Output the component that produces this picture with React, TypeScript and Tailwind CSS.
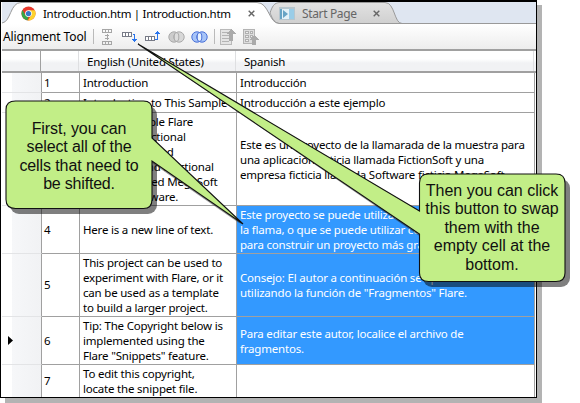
import type { ReactNode } from "react";

type Row = {
  id: number;
  height: string;
  source: string[];
  target: string[];
  selected?: boolean;
  current?: boolean;
};

const rows: Row[] = [
  { id: 1, height: "h-[20px]", source: ["Introduction"], target: ["Introducción"] },
  { id: 2, height: "h-[20px]", source: ["Introduction to This Sample"], target: ["Introducción a este ejemplo"] },
  {
    id: 3,
    height: "h-[93px]",
    source: [
      "This is a sample Flare",
      "project of a fictional",
      "application called",
      "FictionSoft and a fictional",
      "company called MegaSoft",
      "Fictional Software.",
    ],
    target: [
      "Este es un proyecto de la llamarada de la muestra para",
      "una aplicación ficticia llamada FictionSoft y una",
      "empresa ficticia llamada Software ficticio MegaSoft.",
    ],
  },
  {
    id: 4,
    height: "h-[48px]",
    source: ["Here is a new line of text."],
    target: [
      "Este proyecto se puede utilizar para probar",
      "la flama, o que se puede utilizar como base",
      "para construir un proyecto más grande.",
    ],
    selected: true,
  },
  {
    id: 5,
    height: "h-[63px]",
    source: [
      "This project can be used to",
      "experiment with Flare, or it",
      "can be used as a template",
      "to build a larger project.",
    ],
    target: ["Consejo: El autor a continuación se aplica", 'utilizando la función de "Fragmentos" Flare.'],
    selected: true,
  },
  {
    id: 6,
    height: "h-[48px]",
    source: ["Tip: The Copyright below is", "implemented using the", 'Flare "Snippets" feature.'],
    target: ["Para editar este autor, localice el archivo de", "fragmentos."],
    selected: true,
    current: true,
  },
  { id: 7, height: "h-[33px]", source: ["To edit this copyright,", "locate the snippet file."], target: [] },
];

function Lines({ lines }: { lines: string[] }) {
  return (
    <div className="flex flex-col whitespace-nowrap leading-[15px]">
      {lines.map((line) => (
        <span key={line}>{line}</span>
      ))}
    </div>
  );
}

function ChromeIcon() {
  return (
    <svg width="15" height="15" viewBox="0 0 16 16" className="shrink-0">
      <circle cx="8" cy="8" r="7.5" fill="#e8392c" />
      <path d="M1.5 4.3 5 10.2 8 11.5 6.8 15.4A7.5 7.5 0 0 1 1.5 4.3Z" fill="#37a647" />
      <path d="M8 4.6h6.7A7.5 7.5 0 0 1 7.2 15.5L11 9.8Z" fill="#fcd32d" />
      <circle cx="8" cy="8" r="3.6" fill="#fff" />
      <circle cx="8" cy="8" r="2.8" fill="#3678c8" />
    </svg>
  );
}

function CloseIcon() {
  return (
    <svg width="7" height="7" viewBox="0 0 7 7" className="shrink-0">
      <path d="M.7.7 6.3 6.3M6.3.7.7 6.3" stroke="#666" strokeWidth="1.4" />
    </svg>
  );
}

function TabStrip() {
  return (
    <div className="relative h-[22px] shrink-0 bg-[#dfe6f1]">
      <svg className="absolute left-0 top-0" width="534" height="22" viewBox="0 0 534 22">
        <defs>
          <linearGradient id="tab" x1="0" y1="0" x2="0" y2="1">
            <stop offset="0" stopColor="#e2e2e2" />
            <stop offset="1" stopColor="#d0d0d0" />
          </linearGradient>
        </defs>
        <path d="M277 21.5C271 20 270 15 268 11C270 5 272 .5 278 .5H383C393 .5 392 21.5 400 21.5Z" fill="url(#tab)" stroke="#999" />
        <path d="M400 21.5H534" stroke="#999" />
        <path d="M0 21C9 20 8 .5 19 .5H255C267 .5 267 21.5 277 21.5V22H0Z" fill="#fff" />
        <path d="M0 21C9 20 8 .5 19 .5H255C267 .5 267 21.5 277 21.5" fill="none" stroke="#999" />
      </svg>
      <div className="relative flex h-[22px] items-center text-[12px] leading-[15px]">
        <div className="flex w-[267px] items-center pl-[19px]">
          <ChromeIcon />
          <span className="ml-[7px] w-[188px] whitespace-nowrap text-[11.5px] tracking-[-0.28px] text-black">
            Introduction.htm | Introduction.htm
          </span>
          <span className="ml-[17px]">
            <CloseIcon />
          </span>
        </div>
        <div className="flex items-center pl-[10px]">
          <svg width="16" height="13" viewBox="0 0 16 13" className="shrink-0">
            <rect width="16" height="13" fill="#b7c6ce" />
            <rect x="1" y="2" width="9" height="10" fill="#e4f2f8" />
            <rect x="10" y="2" width="5" height="10" fill="#9acde8" />
            <path d="M1 2h2v10H1zM4 3l5 4-5 4z" fill="#67a4c5" />
          </svg>
          <span className="ml-[7px] w-[55px] whitespace-nowrap tracking-[-0.35px] text-[#666]">Start Page</span>
          <span className="ml-[16px]">
            <CloseIcon />
          </span>
        </div>
      </div>
    </div>
  );
}

function Separator() {
  return <span className="h-[15px] w-px bg-[#bababa]" />;
}

function MoveIcon({ up = false }: { up?: boolean }) {
  return (
    <svg width="16" height="12" viewBox="0 0 16 12" shapeRendering="crispEdges">
      <g fill="#fff" stroke="#777a86">
        <path d={up ? "M.5 6.5h9v4h-9zM3.5 6.5v4M6.5 6.5v4" : "M.5 1.5h9v4h-9zM3.5 1.5v4M6.5 1.5v4"} />
      </g>
      {up ? (
        <path d="M10 9h2V4h-2V3h1V2h1V1h1v1h1v1h1v1h-2v6h-3z" fill="#2874ed" />
      ) : (
        <path d="M11 3h2v5h2v1h-1v1h-1v1h-1v-1h-1V9h-1V8h2V4h-1z" fill="#2874ed" />
      )}
    </svg>
  );
}

function CirclesIcon({ active = false }: { active?: boolean }) {
  const stroke = active ? "#4970d8" : "#aaa";
  return (
    <svg width="17" height="12" viewBox="0 0 17 12">
      <circle cx="6" cy="6" r="5.2" fill={active ? "#a7c4f8" : "#ccc"} stroke={stroke} />
      <circle cx="11" cy="6" r="5.2" fill={active ? "#a7c4f8" : "#d8d8d8"} stroke={stroke} />
      <ellipse cx="8.5" cy="6" rx="2.3" ry="4.3" fill={active ? "#e8f2ff" : "#ddd"} stroke={stroke} />
    </svg>
  );
}

function Toolbar() {
  return (
    <div className="flex h-[25px] shrink-0 items-center bg-gradient-to-b from-white to-[#ededed] pl-[1px]">
      <span className="w-[84px] whitespace-nowrap text-[12px] leading-[15px] tracking-[-0.1px]">Alignment Tool</span>
      <span className="ml-[6px] flex">
        <Separator />
      </span>
      <svg className="ml-[8px]" width="10" height="16" viewBox="0 0 10 16" shapeRendering="crispEdges">
        <path
          d="M.5.5h9v3h-9zM3.5.5v3M6.5.5v3M.5 12.5h9v3h-9zM3.5 12.5v3M6.5 12.5v3M5 5v6M3 6.5h4M3 9.5h4"
          fill="none"
          stroke="#a6a6a6"
        />
      </svg>
      <span className="ml-[10px] mt-[1px]">
        <MoveIcon />
      </span>
      <span className="ml-[7px] mt-[-2px]">
        <MoveIcon up />
      </span>
      <span className="ml-[7px]">
        <CirclesIcon />
      </span>
      <span className="ml-[6px]">
        <CirclesIcon active />
      </span>
      <span className="ml-[6px] flex">
        <Separator />
      </span>
      <svg className="ml-[5px]" width="16" height="16" viewBox="0 0 16 16" shapeRendering="crispEdges">
        <path d="M.5.5h11v15H.5z" fill="#e4e4e4" stroke="#b9b9b9" />
        <path d="M2 3.5h7M2 6.5h7M2 9.5h7M2 12.5h7" stroke="#b4b4b4" />
        <path d="M11 0l5 5h-3v7H9V5H6z" fill="#aaa" />
      </svg>
      <svg className="ml-[7px]" width="16" height="16" viewBox="0 0 16 16" shapeRendering="crispEdges">
        <path d="M.5.5h11v14H.5z" fill="#ddd" stroke="#b3b3b3" />
        <path d="M2.5 2.5h3v2h-3zM7.5 2.5h2v2h-2zM2.5 6.5h3v2h-3zM7.5 6.5h2v2h-2zM2.5 10.5h3v2h-3z" fill="#eee" stroke="#b0b0b0" />
        <path d="M11 6l5 5h-3v5H9v-5H6z" fill="#aaa" />
      </svg>
    </div>
  );
}

function AlignmentTable() {
  return (
    <div className="flex grow flex-col overflow-hidden text-[11.5px] tracking-[-0.2px]">
      <div className="grid h-[22px] shrink-0 grid-cols-[39px_38px_157px_298px_2px] border-t border-b border-[#a0a0a0] bg-gradient-to-b from-white from-40% to-[#f1f2f4] to-60%">
        <div className="border-r border-[#a0a0a0]" />
        <div className="border-r border-[#dedfe1]" />
        <div className="flex items-center whitespace-nowrap border-r border-[#dedfe1] pl-[8px] pt-px leading-[15px]">
          English (United States)
        </div>
        <div className="flex items-center border-r border-[#dedfe1] pl-[8px] pt-px leading-[15px]">Spanish</div>
      </div>
      <div className="h-px shrink-0 bg-[#a0a0a0]" />
      {rows.map((row) => (
        <div
          key={row.id}
          className={`grid shrink-0 grid-cols-[40px_38px_157px_298px_1px] ${row.height}`}
        >
          <div className="flex items-center border-r border-b border-r-[#a0a0a0] border-b-[#e3e4e6] bg-gradient-to-r from-white from-25% via-[#f6f7f9] via-26% to-[#f1f2f4] pl-[6px]">
            {row.current && (
              <svg width="5" height="9" viewBox="0 0 5 9">
                <path d="M0 0 5 4.5 0 9Z" fill="#000" />
              </svg>
            )}
          </div>
          <div className="flex items-center border-r border-b border-[#a0a0a0] pl-[2px]">{row.id}</div>
          <div className="flex items-center overflow-hidden border-r border-b border-[#a0a0a0] pl-[3px]">
            <Lines lines={row.source} />
          </div>
          <div
            className={`flex items-center border-r border-b border-[#a0a0a0] pl-[3px] ${row.selected ? "bg-[#3399ff] text-white" : ""}`}
          >
            <Lines lines={row.target} />
          </div>
        </div>
      ))}
    </div>
  );
}

function CalloutText({ className, children }: { className: string; children: ReactNode }) {
  return (
    <div
      className={`absolute flex flex-col items-center whitespace-nowrap font-['Liberation_Sans',Arial,sans-serif] text-[16px] leading-[18.4px] text-[#101010] ${className}`}
    >
      {children}
    </div>
  );
}

function Callouts() {
  const left =
    "M15.5 101H143.5Q152 101 152 109.5V138L243 224L152 161V199.5Q152 208.5 143.5 208.5H15.5Q6 208.5 6 199.5V109.5Q6 101 15.5 101Z";
  const right =
    "M428.5 174H556Q565 174 565 183V273Q565 281.5 556 281.5H428.5Q419.5 281.5 419.5 273V234L138 44L419.5 211V183Q419.5 174 428.5 174Z";
  return (
    <>
      <svg className="absolute left-0 top-0" width="580" height="403" viewBox="0 0 580 403">
        <rect x="10" y="106" width="147" height="108" rx="9" fill="#000" fillOpacity=".5" />
        <rect x="423" y="179" width="147" height="108" rx="9" fill="#000" fillOpacity=".5" />
        <path d="M152 161 243 224 239 223 152 163Z" fill="#333" fillOpacity=".5" />
        <path d="M138 44 419.5 234V236Z" fill="#222" fillOpacity=".5" />
        <path d={left} fill="#c2ee87" stroke="#111" strokeWidth="1.1" />
        <path d={right} fill="#c2ee87" stroke="#111" strokeWidth="1.1" />
      </svg>
      <CalloutText className="left-[6px] top-[120px] w-[146px]">
        <span className="tracking-[-0.1px]">First, you can</span>
        <span className="tracking-[-0.1px]">select all of the</span>
        <span className="tracking-[-0.1px]">cells that need to</span>
        <span className="tracking-[-0.2px]">be shifted.</span>
      </CalloutText>
      <CalloutText className="left-[419px] top-[182px] w-[146px]">
        <span>Then you can click</span>
        <span>this button to swap</span>
        <span>them with the</span>
        <span>empty cell at the</span>
        <span>bottom.</span>
      </CalloutText>
    </>
  );
}

export default function App() {
  return (
    <div className="relative h-[403px] w-[580px] overflow-hidden bg-white font-['Noto_Sans','Open_Sans',sans-serif] text-black">
      <div className="h-[398px] w-[537px] shadow-[5px_5px_0_0_#b3b3b3]">
        <div className="flex h-full w-full flex-col overflow-hidden border border-t-2 border-black bg-white pl-px">
          <TabStrip />
          <Toolbar />
          <div className="h-px shrink-0 bg-[#a0a0a0]" />
          <AlignmentTable />
        </div>
      </div>
      <Callouts />
    </div>
  );
}
